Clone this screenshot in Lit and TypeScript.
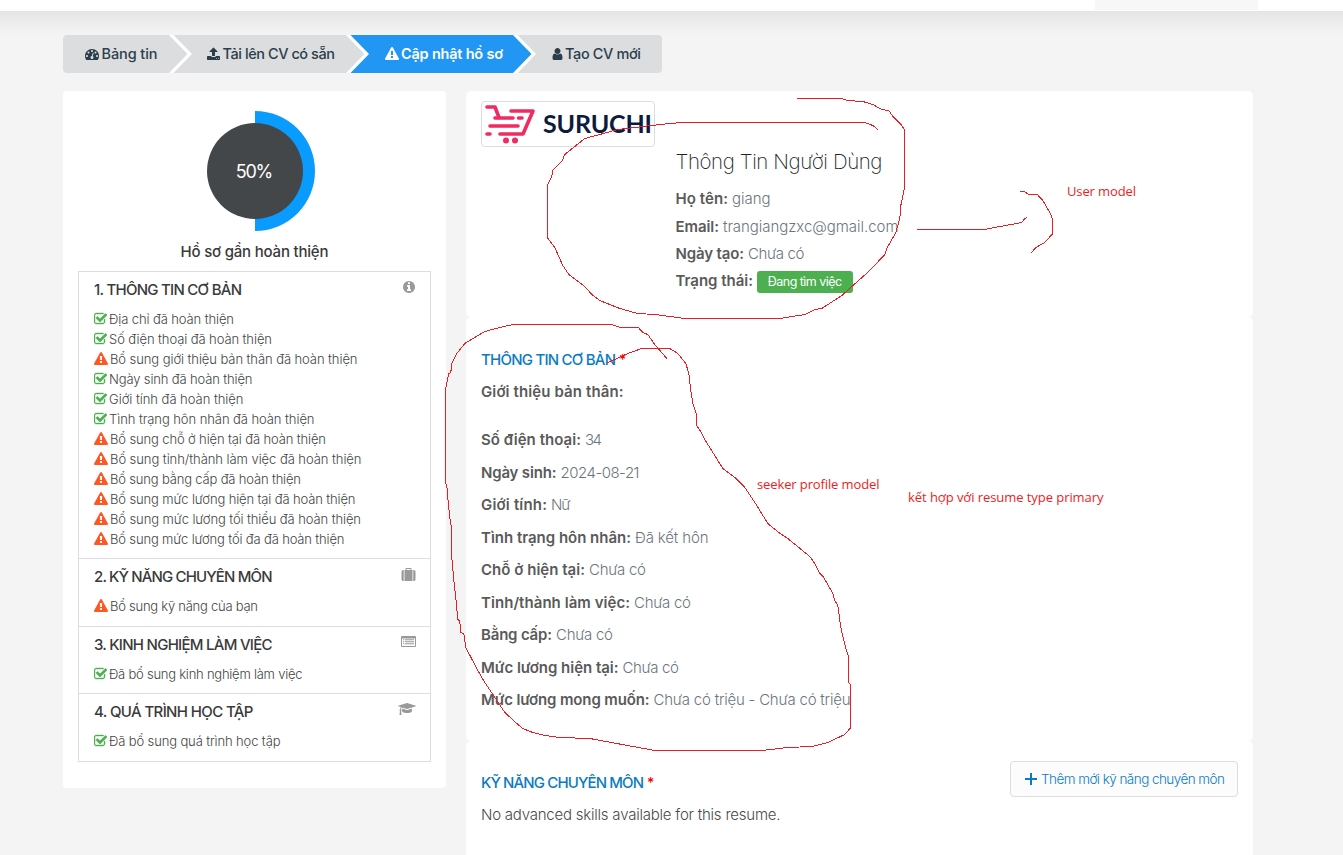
import { LitElement, html, css, svg } from "lit";
import { customElement, property } from "lit/decorators.js";

const ICONS: Record<string, { box: string; w: number; d: string }> = {
  check: { box: "128 0 1664 1792", w: 13, d: "M1536 930v318q0 119-84.5 203.5t-203.5 84.5h-832q-119 0-203.5-84.5t-84.5-203.5v-832q0-119 84.5-203.5t203.5-84.5h832q63 0 117 25 15 7 18 23 3 17-9 29l-49 49q-10 10-23 10-3 0-9-2-23-6-45-6h-832q-66 0-113 47t-47 113v832q0 66 47 113t113 47h832q66 0 113-47t47-113v-254q0-13 9-22l64-64q10-10 23-10 6 0 12 3 20 8 20 29zm231-489l-814 814q-24 24-57 24t-57-24l-430-430q-24-24-24-57t24-57l110-110q24-24 57-24t57 24l263 263 647-647q24-24 57-24t57 24l110 110q24 24 24 57t-24 57z" },
  warn: { box: "0 0 1792 1792", w: 14, d: "M1024 1375v-190q0-14-9.5-23.5t-22.5-9.5h-192q-13 0-22.5 9.5t-9.5 23.5v190q0 14 9.5 23.5t22.5 9.5h192q13 0 22.5-9.5t9.5-23.5zm-2-374l18-459q0-12-10-19-13-11-24-11h-220q-11 0-24 11-10 7-10 21l17 457q0 10 10 16.5t24 6.5h185q14 0 23.5-6.5t10.5-16.5zm-14-934l768 1408q35 63-2 126-17 29-46.5 46t-63.5 17h-1536q-34 0-63.5-17t-46.5-46q-37-63-2-126l768-1408q17-31 47-49t65-18 65 18 47 49z" },
  user: { box: "192 0 1408 1792", w: 11, d: "M1536 1399q0 109-62.5 187t-150.5 78h-854q-88 0-150.5-78t-62.5-187q0-85 8.5-160.5t31.5-152 58.5-131 94-89 134.5-34.5q131 128 313 128t313-128q76 0 134.5 34.5t94 89 58.5 131 31.5 152 8.5 160.5zm-256-887q0 159-112.5 271.5t-271.5 112.5-271.5-112.5-112.5-271.5 112.5-271.5 271.5-112.5 271.5 112.5 112.5 271.5z" },
  upload: { box: "64 0 1664 1792", w: 13, d: "M1344 1472q0-26-19-45t-45-19-45 19-19 45 19 45 45 19 45-19 19-45zm256 0q0-26-19-45t-45-19-45 19-19 45 19 45 45 19 45-19 19-45zm128-224v320q0 40-28 68t-68 28h-1472q-40 0-68-28t-28-68v-320q0-40 28-68t68-28h427q21 56 70.5 92t110.5 36h256q61 0 110.5-36t70.5-92h427q40 0 68 28t28 68zm-325-648q-17 40-59 40h-256v448q0 26-19 45t-45 19h-256q-26 0-45-19t-19-45v-448h-256q-42 0-59-40-17-39 14-69l448-448q18-19 45-19t45 19l448 448q31 30 14 69z" },
  dash: { box: "0 0 1792 1792", w: 14, d: "M384 1152q0-53-37.5-90.5t-90.5-37.5-90.5 37.5-37.5 90.5 37.5 90.5 90.5 37.5 90.5-37.5 37.5-90.5zm192-448q0-53-37.5-90.5t-90.5-37.5-90.5 37.5-37.5 90.5 37.5 90.5 90.5 37.5 90.5-37.5 37.5-90.5zm428 481l101-382q6-26-7.5-48.5t-38.5-29.5-48 6.5-30 39.5l-101 382q-60 5-107 43.5t-63 98.5q-20 77 20 146t117 89 146-20 89-117q16-60-6-117t-72-91zm660-33q0-53-37.5-90.5t-90.5-37.5-90.5 37.5-37.5 90.5 37.5 90.5 90.5 37.5 90.5-37.5 37.5-90.5zm-640-640q0-53-37.5-90.5t-90.5-37.5-90.5 37.5-37.5 90.5 37.5 90.5 90.5 37.5 90.5-37.5 37.5-90.5zm448 192q0-53-37.5-90.5t-90.5-37.5-90.5 37.5-37.5 90.5 37.5 90.5 90.5 37.5 90.5-37.5 37.5-90.5zm320 448q0 261-141 483-19 29-54 29h-1402q-35 0-54-29-141-221-141-483 0-182 71-348t191-286 286-191 348-71 348 71 286 191 191 286 71 348z" },
  info: { box: "128 0 1664 1792", w: 13, d: "M1152 1376v-160q0-14-9-23t-23-9h-96v-512q0-14-9-23t-23-9h-320q-14 0-23 9t-9 23v160q0 14 9 23t23 9h96v320h-96q-14 0-23 9t-9 23v160q0 14 9 23t23 9h448q14 0 23-9t9-23zm-128-896v-160q0-14-9-23t-23-9h-192q-14 0-23 9t-9 23v160q0 14 9 23t23 9h192q14 0 23-9t9-23zm640 416q0 209-103 385.5t-279.5 279.5-385.5 103-385.5-103-279.5-279.5-103-385.5 103-385.5 279.5-279.5 385.5-103 385.5 103 279.5 279.5 103 385.5z" },
  suitcase: { box: "-64 0 1920 1792", w: 15, d: "M640 256h512v-128h-512v128zm-352 0v1408h-64q-92 0-158-66t-66-158v-960q0-92 66-158t158-66h64zm1120 0v1408h-1024v-1408h128v-160q0-40 28-68t68-28h576q40 0 68 28t28 68v160h128zm384 224v960q0 92-66 158t-158 66h-64v-1408h64q92 0 158 66t66 158z" },
  list: { box: "0 0 15 14", w: 15, d: "M1 0h13a1 1 0 0 1 1 1v9a1 1 0 0 1-1 1H1a1 1 0 0 1-1-1V1a1 1 0 0 1 1-1zM1 2.500v7.500h13V2.500zM2 3.200h1.200v1H2zM4 3.200h9v1H4zM2 5.200h1.200v1H2zM4 5.200h9v1H4zM2 7.200h1.200v1H2zM4 7.200h9v1H4z" },
  cap: { box: "0 0 2304 1792", w: 18, d: "M1774 836l18 316q4 69-82 128t-235 93.5-323 34.5-323-34.5-235-93.5-82-128l18-316 574 181q22 7 48 7t48-7zm530-324q0 23-22 31l-1120 352q-4 1-10 1t-10-1l-652-206q-43 34-71 111.5t-34 178.5q63 36 63 109 0 69-58 107l58 433q2 14-8 25-9 11-24 11h-192q-15 0-24-11-10-11-8-25l58-433q-58-38-58-107 0-73 65-111 11-207 98-330l-333-104q-22-8-22-31t22-31l1120-352q4-1 10-1t10 1l1120 352q22 8 22 31z" },
  plus: { box: "0 0 12 14", w: 12, d: "M5 1h2v5h5v2H7v5H5V8H0V6h5z" },
};

const icon = (name: string) => {
  const i = ICONS[name];
  return html`<svg class="ic ${name}" width=${i.w} height="14" viewBox=${i.box}>
    <path fill="currentColor" fill-rule="evenodd" d=${i.d}></path>
  </svg>`;
};

/* One line of text tracked so that it spans a given width. */
@customElement("fit-text")
export class FitText extends LitElement {
  @property() text = "";
  @property({ type: Number }) w = 0;
  static styles = css`
    :host { display: inline-block; white-space: pre; flex: none; }
    span { display: inline-block; }
  `;
  render() {
    return html`<span>${this.text}</span>`;
  }
  updated() {
    const el = this.renderRoot.querySelector("span") as HTMLElement;
    this.style.width = this.w + "px";
    el.style.letterSpacing = "0";
    const gaps = Math.max(1, [...this.text.normalize("NFC")].length - 1);
    const natural = el.getBoundingClientRect().width;
    el.style.letterSpacing = (this.w - natural) / gaps + "px";
  }
}

const fit = (text: string, w: number, cls = "") =>
  html`<fit-text class=${cls} .text=${text} .w=${w}></fit-text>`;

const STEPS = [
  { icon: "dash", text: "Bảng tin", w: 56, cls: "s1" },
  { icon: "upload", text: "Tải lên CV có sẵn", w: 112.5, cls: "s2" },
  { icon: "warn", text: "Cập nhật hồ sơ", w: 102, cls: "s3" },
  { icon: "user", text: "Tạo CV mới", w: 76, cls: "s4" },
];

const SECTIONS = [
  {
    title: "1. THÔNG TIN CƠ BẢN", w: 148, icon: "info", cls: "q1",
    items: [
      [1, "Địa chỉ đã hoàn thiện", 125],
      [1, "Số điện thoại đã hoàn thiện", 163],
      [0, "Bổ sung giới thiệu bản thân đã hoàn thiện", 247.5],
      [1, "Ngày sinh đã hoàn thiện", 143.5],
      [1, "Giới tính đã hoàn thiện", 134.5],
      [1, "Tình trạng hôn nhân đã hoàn thiện", 205.5],
      [0, "Bổ sung chỗ ở hiện tại đã hoàn thiện", 216],
      [0, "Bổ sung tỉnh/thành làm việc đã hoàn thiện", 251.5],
      [0, "Bổ sung bằng cấp đã hoàn thiện", 191],
      [0, "Bổ sung mức lương hiện tại đã hoàn thiện", 245.5],
      [0, "Bổ sung mức lương tối thiểu đã hoàn thiện", 251],
      [0, "Bổ sung mức lương tối đa đã hoàn thiện", 234.5],
    ],
  },
  { title: "2. KỸ NĂNG CHUYÊN MÔN", w: 178.5, icon: "suitcase", cls: "q2", items: [[0, "Bổ sung kỹ năng của bạn", 148]] },
  { title: "3. KINH NGHIỆM LÀM VIỆC", w: 178.5, icon: "list", cls: "q3", items: [[1, "Đã bổ sung kinh nghiệm làm việc", 193.5]] },
  { title: "4. QUÁ TRÌNH HỌC TẬP", w: 159.5, icon: "cap", cls: "q4", items: [[1, "Đã bổ sung quá trình học tập", 171.5]] },
] as { title: string; w: number; icon: string; cls: string; items: [number, string, number][] }[];

const USER: [string, number, string, number][] = [
  ["Họ tên:", 52.5, "giang", 38.5],
  ["Email:", 43.5, "trangiangzxc@gmail.com", 175.5],
  ["Ngày tạo:", 68.5, "Chưa có", 56.5],
];

const PROFILE: [string, number, string, number][] = [
  ["Số điện thoại:", 100, "34", 17],
  ["Ngày sinh:", 75.5, "2024-08-21", 79],
  ["Giới tính:", 66, "Nữ", 19.5],
  ["Tình trạng hôn nhân:", 150, "Đã kết hôn", 73.5],
  ["Chỗ ở hiện tại:", 104, "Chưa có", 57],
  ["Tỉnh/thành làm việc:", 149, "Chưa có", 57],
  ["Bằng cấp:", 71, "Chưa có", 57],
  ["Mức lương hiện tại:", 137.5, "Chưa có", 56.5],
  ["Mức lương mong muốn:", 168.5, "Chưa có triệu - Chưa có triệu", 197],
];

const STROKES = [
  "797,98 841,98 848,100 863,101 873,104 882,109 889,110 893,116 902,125 905,130 905,160 904.5,188 901,205 900,218 896,232 887,248 885,254 870,270 842,295 822,308 815,309 805,314 780,318 685,318 655,314 638,313 620,308 600,300 592,294 585,286 569,274 563,265 555,247 547.5,237 547.5,185 552,176 553,170 562,161 565,154 585,138 600,134 618,129 660,124 682,122 865,122 873,125 878,129",
  "917,229 985,229 992,227.5 1022,222 1024,219 1027,217",
  "1020,191 1025,191.5 1029,194 1038,194.5 1043,200 1050,212 1053,219 1053,233 1045,242 1036,247 1031.5,252.5",
  "607,362.5 617,358 628,353 642,348 670,348 678,353 686,363 689,373 691,390 693,403 697,415 697,425 702,433 705,439 723,468 735,477 745,487 757,505 768,523 779,532 788,538 810,556 815,563 820,573 824,577 833,593 835,600 838,605 841,627 846,648 849,657 849,682 851,685 851,727 845,734 828,742 812,746 788,747 762,750 655,750 617,743 590,738 560,737 545,735 533,732 523,728 517,723 505,712 493,694 485,682 478,670 466,647 464,633 461,632 460,621 458,619 456,597 454,580 452,557 452,530 450,517 448,497 447,485 445.5,482 445.5,390 449,373 451,372 452,363 457,353 465,343 485,331 500,327 513,324 612,324 621,327 639,327.5 643,332 648,334 655,344 667,358",
];

@customElement("app-root")
export class AppRoot extends LitElement {
  static styles = css`
    :host {
      display: block; position: relative; width: 1343px; height: 855px; overflow: hidden;
      background: #f4f4f4; font-family: Inter, "Noto Sans", sans-serif; font-size: 15px; color: #555;
    }
    * { box-sizing: border-box; }
    .ic { display: block; flex: none; }
    .top { height: 11px; background: #fff; display: flex; justify-content: flex-end; padding-right: 85px; }
    .top i { width: 163px; height: 10px; background: #f7f7f7; }
    .shade { height: 24px; background: linear-gradient(#e4e4e4, #ebebeb 35%, #f4f4f4); }
    nav { display: flex; width: 599px; height: 38px; margin-left: 63px; border-radius: 4px; overflow: hidden; background: #dbdddf; }
    .step { position: relative; display: flex; align-items: center; gap: 2.5px; height: 38px; color: #2c3e4b; font-size: 14.5px; font-weight: 500; }
    .step fit-text { line-height: 38px; }
    .s1 { width: 106px; padding-left: 22px; }
    .s2 { width: 177px; padding-left: 38px; }
    .s3 { width: 167px; padding-left: 39px; background: #2196f3; color: #fff; font-weight: 600; gap: 2px; }
    .s4 { width: 149px; padding-left: 39px; gap: 2px; }
    .chev { position: absolute; left: 100%; top: 0; z-index: 1; }
    .cols { display: flex; gap: 20px; align-items: flex-start; padding: 18px 90px 0 63px; }
    aside { width: 383px; height: 697px; background: #fff; border-radius: 4px; padding: 20px 15px 0; }
    .donut { display: block; margin: 0 auto; width: 120px; height: 120px; }
    .pct { height: 120px; display: grid; place-items: center; }
    .pct > * { grid-area: 1 / 1; }
    .num { color: #fff; font-size: 18px; }
    .state { display: flex; justify-content: center; height: 40px; line-height: 41px; font-weight: 500; color: #3a3a3a; }
    .box { border: 1px solid #ddd; }
    .sec { padding: 0 14px 0 15px; border-top: 1px solid #ddd; }
    .sec:first-child { border-top: 0; }
    .hd { display: flex; justify-content: space-between; height: 37px; line-height: 36px; color: #3a3a3a; font-weight: 500; }
    .hd .ic { color: #999; }
    .q1 { height: 286px; } .q2 { height: 68px; } .q3 { height: 67px; } .q4 { height: 68px; }
    .q1 .ic.info { margin-top: 8px; }
    .q2 .ic.suitcase { margin-top: 9px; }
    .q3 .ic.list { margin-top: 9px; }
    .q4 .ic.cap { margin-top: 8px; }
    .it { display: flex; align-items: center; gap: 2px; height: 20px; line-height: 20px; font-size: 13px; font-weight: 300; color: #444; }
    .it .check { color: #4caf50; stroke: #4caf50; stroke-width: 50; }
    .it .warn { color: #ff5722; }
    main { width: 787px; }
    .card { background: #fff; border-radius: 5px; padding: 0 15px; }
    .c1 { height: 226px; padding-top: 10px; display: flex; gap: 20.5px; }
    .c2 { height: 424px; padding-top: 28px; }
    .c3 { height: 130px; padding-top: 20px; display: flex; justify-content: space-between; }
    .logo { width: 174px; height: 46px; border: 1px solid #ddd; border-radius: 4px; overflow: hidden; display: block; }
    .who { padding-top: 46px; }
    .who h2 { margin: 0 0 8px; height: 30px; line-height: 29px; font-size: 20.5px; font-weight: 200; color: #222; }
    .row { display: flex; align-items: center; gap: 4px; height: 27.5px; line-height: 27px; }
    .c1 .row { height: 27.4px; }
    .c2 .row { height: 32.5px; line-height: 32px; }
    .c2 .intro { margin: 1px 0 15.5px; }
    .b { font-weight: 600; color: #5a5a5a; }
    .v { font-weight: 300; color: #6c757d; }
    .badge { display: flex; align-items: center; justify-content: center; width: 96px; height: 22px; margin-top: 1.5px; line-height: 22px; background: #4caf50; color: #fff; border-radius: 3px; font-size: 12.5px; }
    .ttl { display: flex; gap: 3px; height: 30px; line-height: 30px; color: #0b7bc1; font-weight: 500; }
    .ttl i { font-style: normal; color: #e00; font-size: 14px; }
    .c3 .ttl { margin-top: 7px; margin-bottom: 2px; }
    .none { line-height: 30px; color: #4a4a4a; font-weight: 300; }
    .add { display: flex; align-items: center; justify-content: center; gap: 4px; width: 228px; height: 36px; padding-left: 2px; border: 1px solid #ddd; border-radius: 4px; background: #fcfcfc; color: #0b7bc1; font-size: 13.5px; font-weight: 300; }
    .ink { position: absolute; left: 0; top: 0; pointer-events: none; z-index: 3; }
    .note { position: absolute; z-index: 3; color: #ed1c24; font-family: "Open Sans", "Noto Sans", sans-serif; font-size: 13px; line-height: 18px; }
    .n1 { left: 1067px; top: 182px; }
    .n2 { left: 757px; top: 475px; }
    .n3 { left: 908px; top: 488px; }
  `;

  private row([k, kw, v, vw]: [string, number, string, number]) {
    return html`<div class="row">${fit(k, kw, "b")}${fit(v, vw, "v")}</div>`;
  }

  render() {
    return html`
      <div class="top"><i></i></div>
      <div class="shade"></div>
      <nav>
        ${STEPS.map((s, n) => html`<div class="step ${s.cls}">
          ${icon(s.icon)}${fit(s.text, s.w)}
          ${n < 3 ? html`<svg class="chev" width="24" height="38">
            <path fill="#fff" d="M-1 0H4.5L23 19L4.5 38H-1z"></path>
            <path fill=${n === 2 ? "#2196f3" : "#dbdddf"} d="M0 0L18.500 19L0 38z"></path>
          </svg>` : ""}
        </div>`)}
      </nav>
      <div class="cols">
        <aside>
          <div class="pct">
            <svg class="donut" viewBox="0 0 120 120">
              <path fill="#0a9bff" d="M60 0a60 60 0 0 1 0 120z"></path>
              <circle cx="60" cy="60" r="48" fill="#444749"></circle>
            </svg>
            <span class="num">${fit("50%", 37.5)}</span>
          </div>
          <div class="state">${fit("Hồ sơ gần hoàn thiện", 148)}</div>
          <div class="box">
            ${SECTIONS.map((s) => html`<section class="sec ${s.cls}">
              <div class="hd">${fit(s.title, s.w)}${icon(s.icon)}</div>
              ${s.items.map(([ok, t, w]) => html`<div class="it">${icon(ok ? "check" : "warn")}${fit(t, w)}</div>`)}
            </section>`)}
          </div>
        </aside>
        <main>
          <div class="card c1">
            <svg class="logo" viewBox="0 0 172 44">
              <g fill="none" stroke="#ef2b62" stroke-width="3.6" stroke-linecap="round" stroke-linejoin="round">
                <path d="M5 5H13L17 15.500"></path>
                <path d="M29 9H51L41 32H18"></path>
                <path d="M13 16H31M36.500 16H40M8 24H36M5 32H8"></path>
              </g>
              <circle cx="24" cy="38.500" r="3" fill="#ef2b62"></circle>
              <circle cx="33" cy="38.500" r="3" fill="#ef2b62"></circle>
              <text x="61" y="30.500" font-family="Lato" font-weight="700" font-size="25" fill="#0b1c3f" textLength="109">SURUCHI</text>
            </svg>
            <div class="who">
              <h2>${fit("Thông Tin Người Dùng", 207)}</h2>
              ${USER.map((r) => this.row(r))}
              <div class="row">${fit("Trạng thái:", 77.5, "b")}<span class="badge">${fit("Đang tìm việc", 74.5)}</span></div>
            </div>
          </div>
          <div class="card c2">
            <div class="ttl">${fit("THÔNG TIN CƠ BẢN", 135)}<i>*</i></div>
            <div class="row intro">${fit("Giới thiệu bản thân:", 142.5, "b")}</div>
            ${PROFILE.map((r) => this.row(r))}
          </div>
          <div class="card c3">
            <div>
              <div class="ttl">${fit("KỸ NĂNG CHUYÊN MÔN", 163)}<i>*</i></div>
              <div class="none">${fit("No advanced skills available for this resume.", 299.5)}</div>
            </div>
            <div class="add">${icon("plus")}${fit("Thêm mới kỹ năng chuyên môn", 184)}</div>
          </div>
        </main>
      </div>
      <svg class="ink" width="1343" height="855" shape-rendering="crispEdges">
        <g fill="none" stroke="#ed1c24" stroke-width="1" transform="translate(-.2 .5)">
          ${STROKES.map((p) => svg`<polyline points=${p}></polyline>`)}
        </g>
      </svg>
      <div class="note n1">${fit("User model", 69)}</div>
      <div class="note n2">${fit("seeker profile model", 122.5)}</div>
      <div class="note n3">${fit("kết hợp với resume type primary", 195.5)}</div>
    `;
  }
}
